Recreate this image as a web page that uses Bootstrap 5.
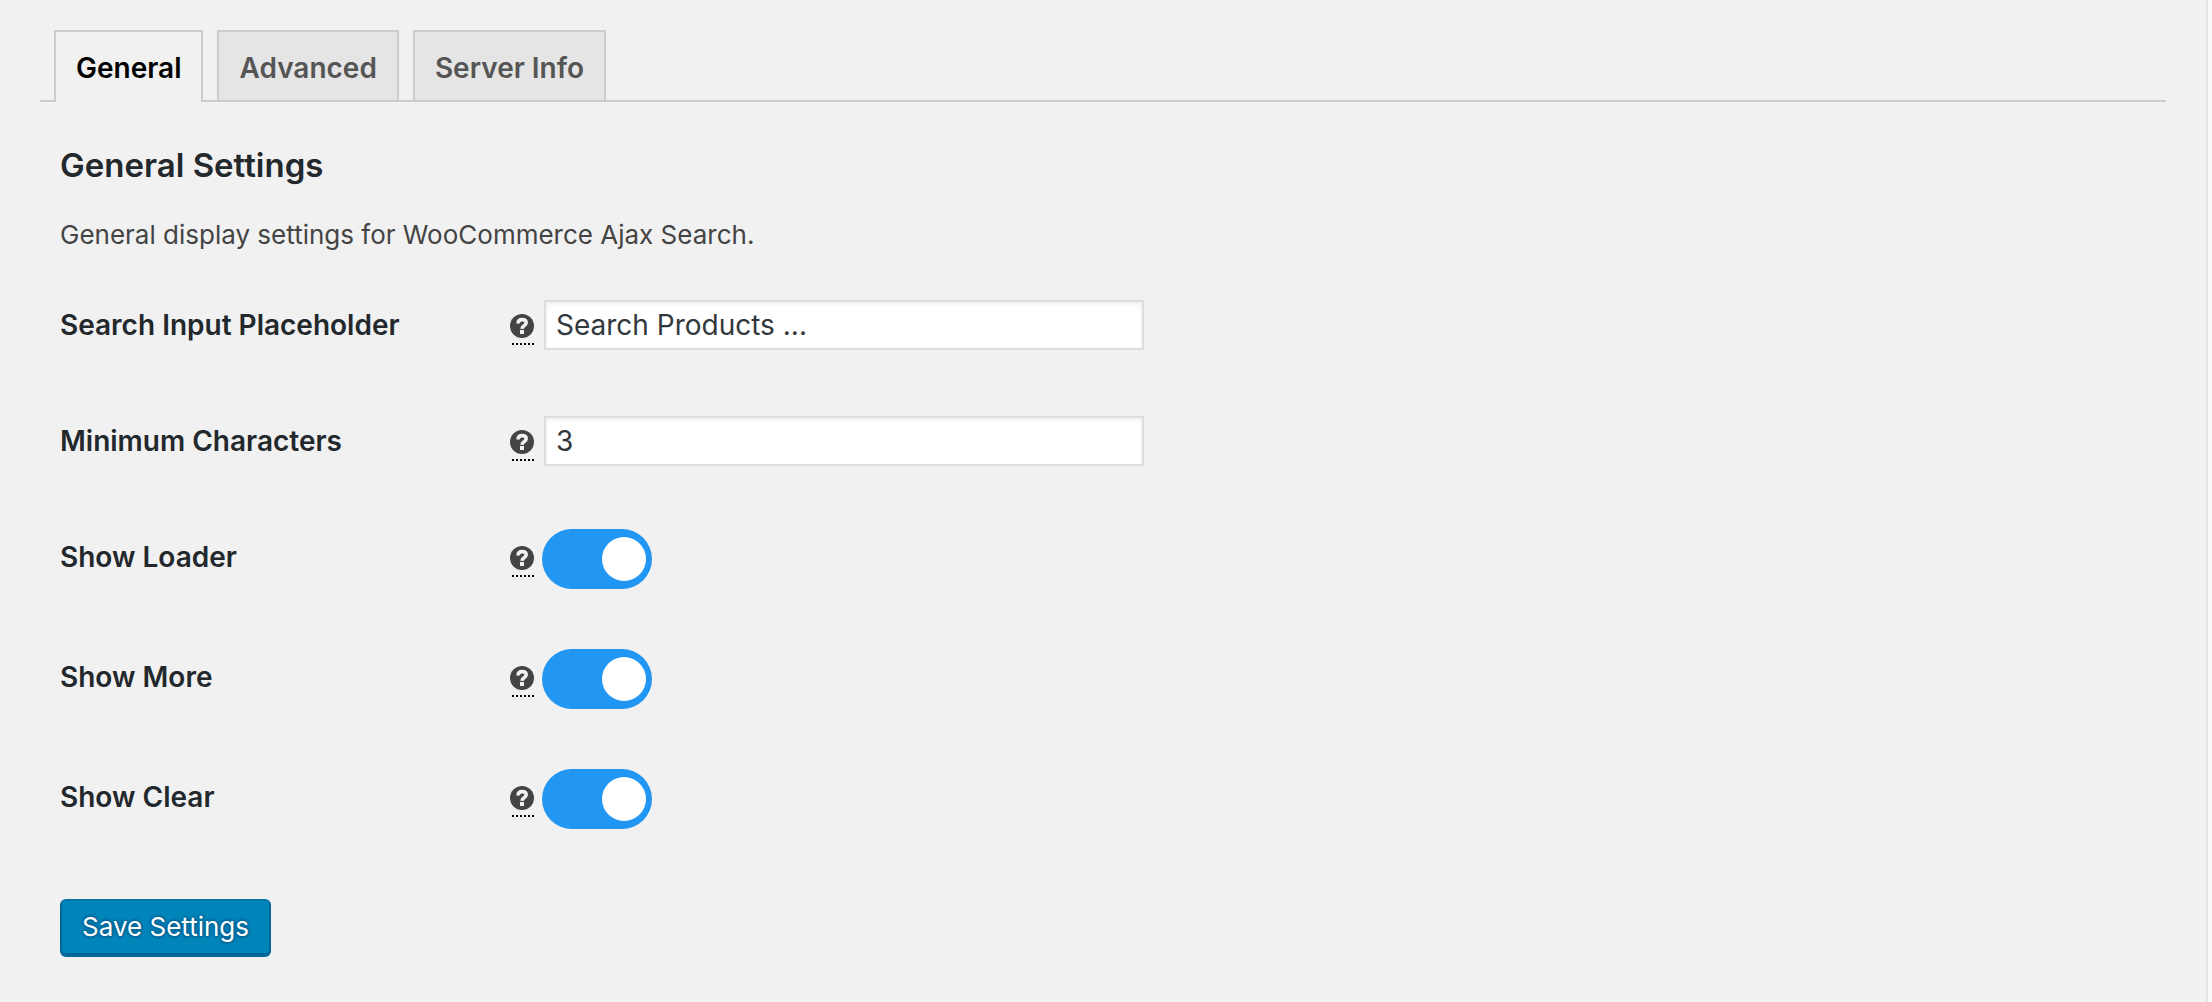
<!DOCTYPE html>
<html lang="en">
<head>
<meta charset="utf-8">
<meta name="viewport" content="width=device-width, initial-scale=1">
<title>WooCommerce Ajax Search - General Settings</title>
<link rel="stylesheet" href="https://cdn.jsdelivr.net/npm/bootstrap@5.3.0/dist/css/bootstrap.min.css">
<style>
  body {
    background: #f1f1f1;
    color: #444;
    font-family: Inter, "Liberation Sans", sans-serif;
    font-size: 26px;
    line-height: 40px;
  }
  .admin-page {
    border-right: 2px solid #e5e5e5;
    box-shadow: 4px 0 0 #fafafa;
    margin-right: 4px;
    padding: 30px 40px 20px;
  }
  .settings-tabs {
    --bs-nav-tabs-border-width: 0;
    border-bottom: 2px solid #ccc;
    gap: 14px;
    padding-left: 14px;
  }
  .settings-tabs .nav-link {
    background: #e5e5e5;
    border: 2px solid #ccc;
    border-bottom: 0;
    border-radius: 0;
    color: #555;
    font-size: 28px;
    font-weight: 600;
    line-height: 48px;
    margin-bottom: 0;
    padding: 12px 20px 8px;
  }
  .settings-tabs .nav-link.active {
    background: #f1f1f1;
    border-color: #ccc;
    color: #000;
    margin-bottom: -2px;
    padding-bottom: 10px;
  }
  .settings-body { padding: 42px 20px 0; }
  .settings-title {
    color: #23282d;
    font-size: 33px;
    font-weight: 600;
    line-height: 42px;
    margin-bottom: 29px;
  }
  .settings-intro { margin-bottom: 12px; }
  .setting-row { padding: 30px 0; }
  .setting-control { min-height: 56px; }
  .setting-name {
    color: #23282d;
    font-size: 28px;
    font-weight: 600;
    line-height: 56px;
    width: 450px;
  }
  .help-tip {
    align-self: flex-start;
    border-bottom: 2px dotted #000;
    cursor: help;
    height: 31px;
    margin: 17px 10px 0 2px;
    width: 22px;
  }
  .help-tip svg { display: block; height: 24px; margin-left: -2px; width: 24px; }
  .setting-text {
    border: 2px solid #ddd;
    border-radius: 0;
    box-shadow: inset 0 2px 4px rgba(0, 0, 0, .07);
    color: #32373c;
    font-size: 28px;
    height: 50px;
    line-height: 40px;
    max-width: 600px;
    padding: 0 10px;
  }
  .setting-switch.form-check-input {
    background: #2196f3;
    border: 0;
    border-radius: 30px;
    display: flex;
    height: 60px;
    margin: 0 0 0 -2px;
    padding: 8px 6px;
    width: 110px;
  }
  .setting-switch::before {
    background: #fff;
    border-radius: 50%;
    content: "";
    height: 44px;
    width: 44px;
  }
  .setting-switch:checked { justify-content: flex-end; }
  .setting-switch.form-check-input:not(:checked) { background: #ccc; }
  .btn-save {
    --bs-btn-bg: #0085ba;
    --bs-btn-border-color: #0073aa;
    --bs-btn-color: #fff;
    --bs-btn-hover-bg: #008ec2;
    --bs-btn-hover-border-color: #006799;
    --bs-btn-hover-color: #fff;
    border-color: #0073aa #006799 #006799;
    border-radius: 6px;
    border-width: 2px;
    box-shadow: 0 2px 0 #006799;
    display: block;
    font-size: 26px;
    line-height: 52px;
    margin-top: 40px;
    padding: 0 20px;
    text-shadow: 0 -2px 2px #006799, 2px 0 2px #006799, 0 2px 2px #006799, -2px 0 2px #006799;
  }
</style>
<script src="https://cdn.jsdelivr.net/npm/bootstrap@5.3.0/dist/js/bootstrap.bundle.min.js"></script>
</head>
<body>
<svg class="d-none" aria-hidden="true">
  <symbol id="help-icon" viewBox="0 0 24 24">
    <circle cx="12" cy="12" r="12" fill="#444"/>
    <path d="M8 9.500C8.100 6.900 9.600 5.600 12 5.600c2.500 0 4.200 1.200 4.200 3.200 0 1.500-.8 2.200-2.100 3-1.300.8-2 1.300-2.100 3" fill="none" stroke="#f1f1f1" stroke-width="3.600"/>
    <path d="M10 16h4v4h-4z" fill="#f1f1f1"/>
  </symbol>
</svg>
<main class="admin-page min-vh-100">
  <nav class="nav nav-tabs settings-tabs" aria-label="Settings sections">
    <a class="nav-link active" href="#general" aria-current="page">General</a>
    <a class="nav-link" href="#advanced">Advanced</a>
    <a class="nav-link" href="#server-info">Server Info</a>
  </nav>
  <form class="settings-body" id="general">
    <h2 class="settings-title">General Settings</h2>
    <p class="settings-intro">General display settings for WooCommerce Ajax Search.</p>

    <div class="setting-row d-flex align-items-start">
      <label class="setting-name flex-shrink-0" for="placeholder">Search Input Placeholder</label>
      <div class="setting-control d-flex align-items-center flex-grow-1">
        <span class="help-tip flex-shrink-0"><svg aria-hidden="true"><use href="#help-icon"/></svg></span>
        <input class="form-control setting-text" type="text" id="placeholder" value="Search Products ...">
      </div>
    </div>
    <div class="setting-row d-flex align-items-start">
      <label class="setting-name flex-shrink-0" for="min-chars">Minimum Characters</label>
      <div class="setting-control d-flex align-items-center flex-grow-1">
        <span class="help-tip flex-shrink-0"><svg aria-hidden="true"><use href="#help-icon"/></svg></span>
        <input class="form-control setting-text" type="number" id="min-chars" value="3">
      </div>
    </div>
    <div class="setting-row d-flex align-items-start">
      <label class="setting-name flex-shrink-0" for="show-loader">Show Loader</label>
      <div class="setting-control d-flex align-items-center flex-grow-1">
        <span class="help-tip flex-shrink-0"><svg aria-hidden="true"><use href="#help-icon"/></svg></span>
        <input class="form-check-input setting-switch" type="checkbox" role="switch" id="show-loader" checked>
      </div>
    </div>
    <div class="setting-row d-flex align-items-start">
      <label class="setting-name flex-shrink-0" for="show-more">Show More</label>
      <div class="setting-control d-flex align-items-center flex-grow-1">
        <span class="help-tip flex-shrink-0"><svg aria-hidden="true"><use href="#help-icon"/></svg></span>
        <input class="form-check-input setting-switch" type="checkbox" role="switch" id="show-more" checked>
      </div>
    </div>
    <div class="setting-row d-flex align-items-start">
      <label class="setting-name flex-shrink-0" for="show-clear">Show Clear</label>
      <div class="setting-control d-flex align-items-center flex-grow-1">
        <span class="help-tip flex-shrink-0"><svg aria-hidden="true"><use href="#help-icon"/></svg></span>
        <input class="form-check-input setting-switch" type="checkbox" role="switch" id="show-clear" checked>
      </div>
    </div>
    <button class="btn btn-save" type="submit">Save Settings</button>
  </form>
</main>
</body>
</html>
